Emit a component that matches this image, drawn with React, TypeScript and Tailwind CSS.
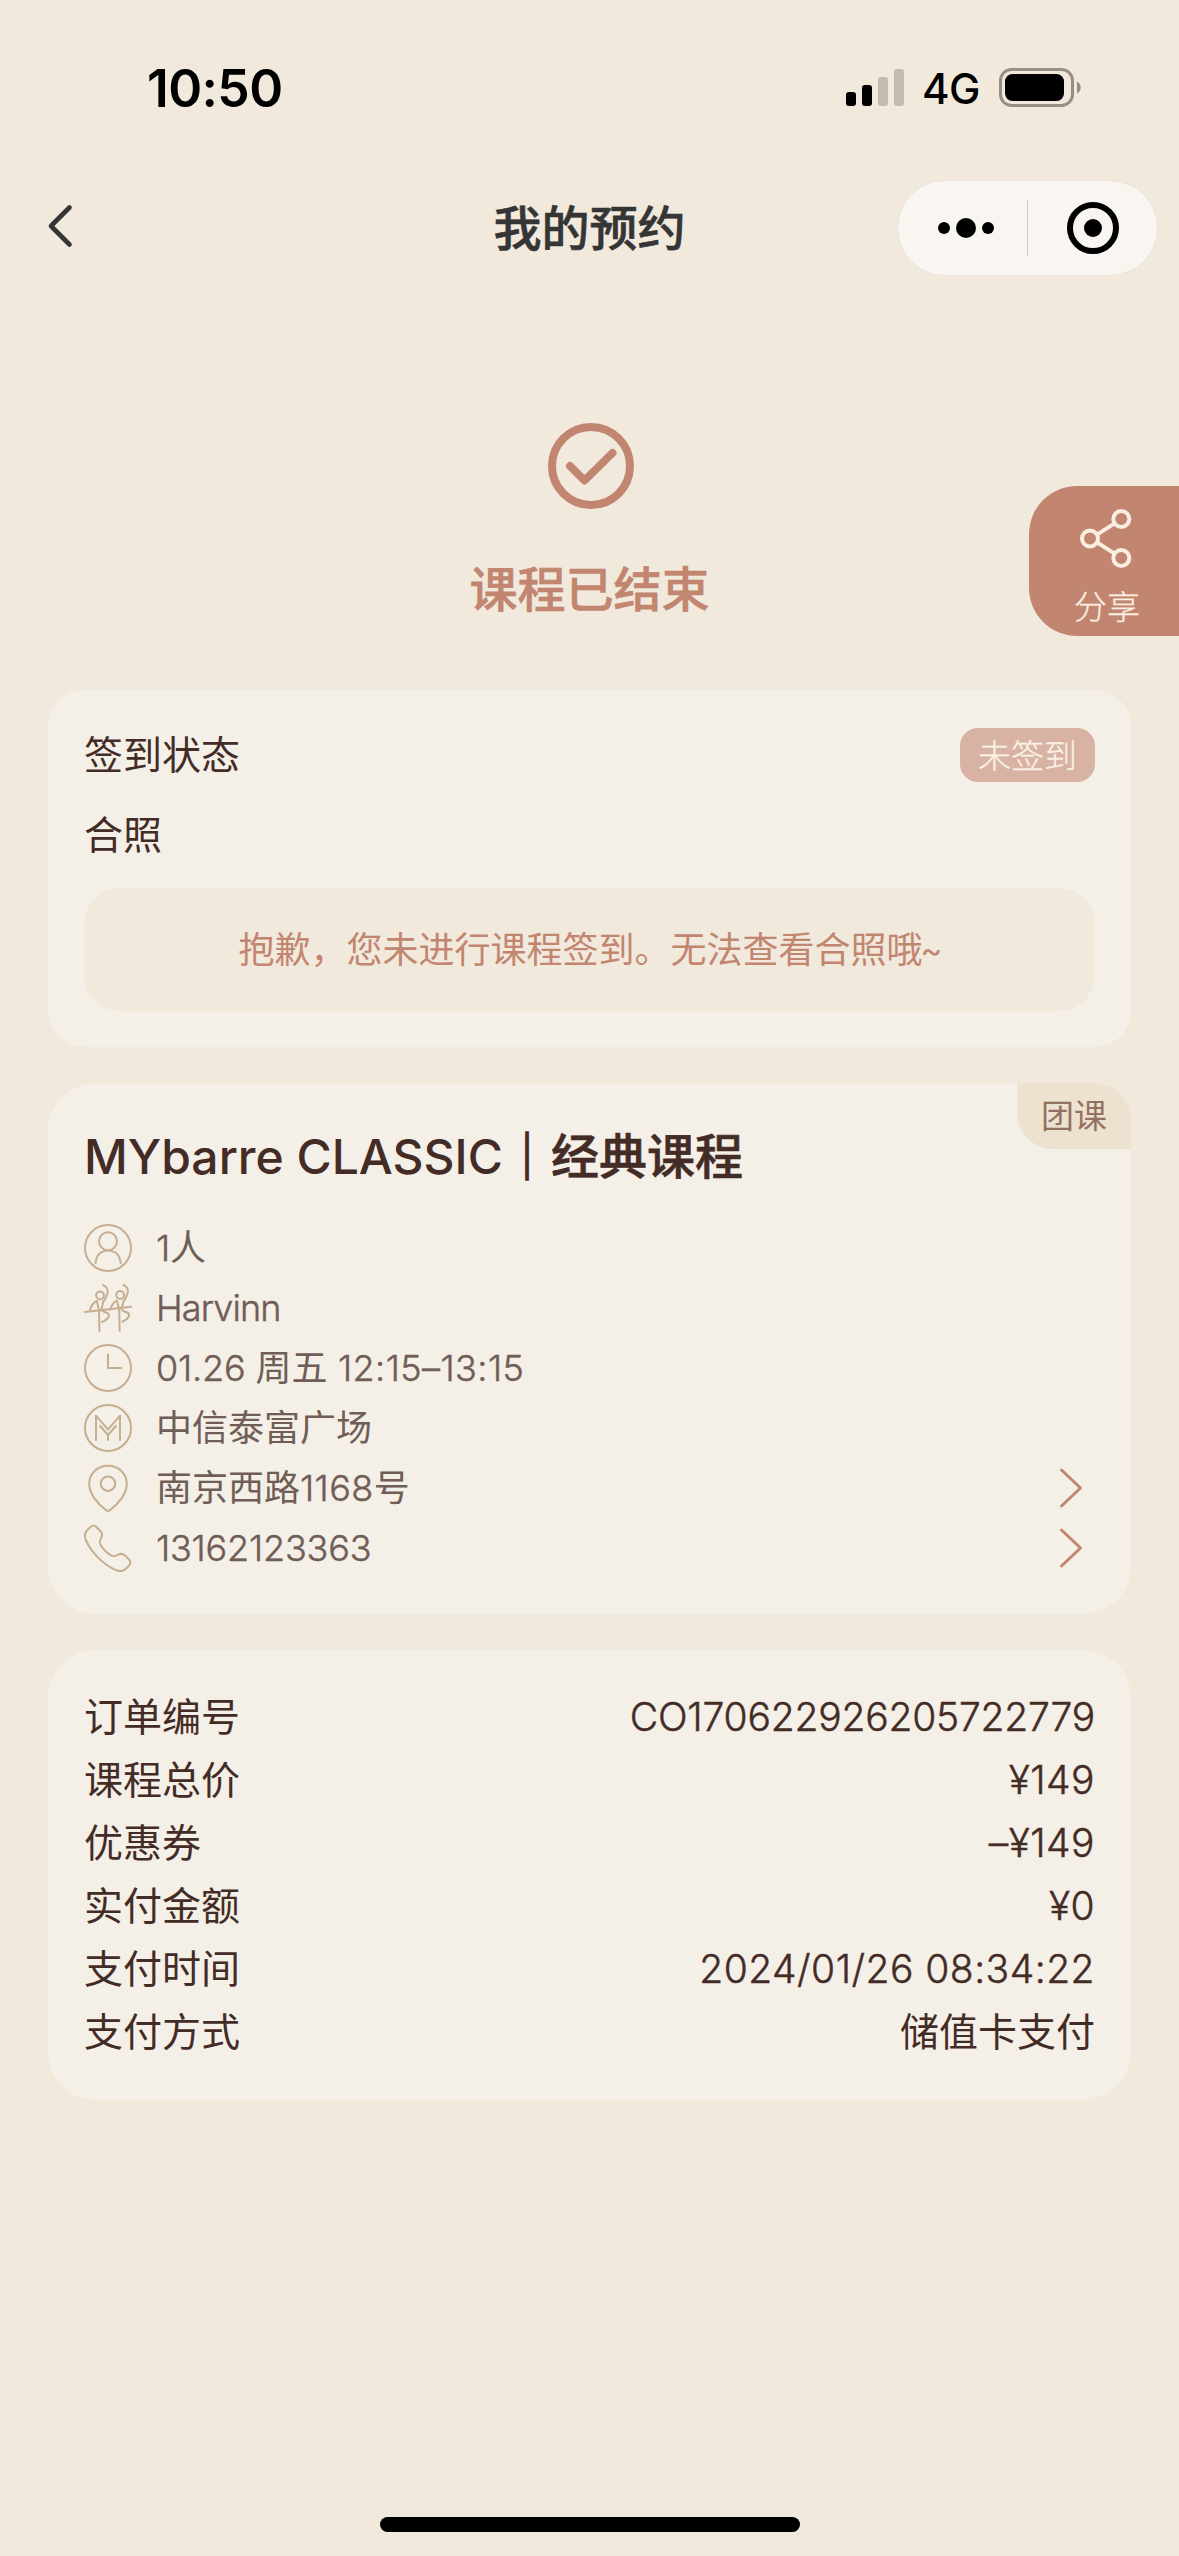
import type { ReactNode } from "react";

const iconProps = {
  width: 48,
  height: 48,
  viewBox: "0 0 48 48",
  fill: "none",
  stroke: "#c6ae90",
  strokeWidth: 2,
  strokeLinecap: "round" as const,
  strokeLinejoin: "round" as const,
  className: "shrink-0",
};

function PersonIcon() {
  return (
    <svg {...iconProps}>
      <circle cx="24" cy="24" r="23" />
      <circle cx="24" cy="17.3" r="9" />
      <path d="M11.6 39.3C12 31 17 26.4 24 26.4S36 31 36.6 39.3" />
    </svg>
  );
}

function Dancer() {
  return (
    <>
      <circle cx="16" cy="11.3" r="3.9" />
      <path d="M19.2 1.1C22.6 2.6 24.3 6 23.4 9.4C22.8 12 21.6 14 20.2 16.8" />
      <path d="M6 26C7.2 21.6 9.6 18.4 12.8 17" />
      <path d="M12.8 17L14.8 25.4M19.4 17L17.4 25.4" />
      <path d="M15 25.6L15.4 47" />
      <path d="M17.8 26.2C20 28.6 25 28.4 25 31.2C25 34 21 37 18 38" />
    </>
  );
}

function DancersIcon() {
  return (
    <svg {...iconProps}>
      <Dancer />
      <g transform="translate(20.2 -.3)">
        <Dancer />
      </g>
      <path d="M1 28L47 22.8" />
    </svg>
  );
}

function ClockIcon() {
  return (
    <svg {...iconProps}>
      <circle cx="24" cy="24" r="23" />
      <path d="M24 10.6V24H37.2" />
    </svg>
  );
}

function StudioIcon() {
  return (
    <svg {...iconProps}>
      <circle cx="24" cy="24" r="23" />
      <path d="M12 36V11.8L24 25.4L36 11.8V36" />
      <path d="M16 22L24 31L32 22M24 31V36" />
    </svg>
  );
}

function PinIcon() {
  return (
    <svg {...iconProps}>
      <path d="M24 1.8C13.4 1.8 5.2 9.8 5.2 19.8C5.2 29.4 13 39.6 22.4 46.4Q24 47.4 25.6 46.4C35 39.6 42.8 29.4 42.8 19.8C42.8 9.8 34.6 1.8 24 1.8Z" />
      <circle cx="24" cy="19.7" r="7.2" />
    </svg>
  );
}

function PhoneIcon() {
  return (
    <svg {...iconProps}>
      <path d="M6.4 3C8.4 1 10.8 1.4 12.6 3.2L16.4 7C19 9.6 18.6 11.6 17 14.4C15.2 17.4 15.2 19 17.4 22.2C19.6 25.6 22.6 28.6 25.8 30.6C29 32.8 30.6 32.8 33.6 31C36.4 29.2 38.4 29.2 41 31.6L44.8 35.2C46.8 37.2 47 39.4 45 41.6L41.6 45C39 47.4 35.6 47.6 32 46.2C19 40.4 7.4 28.6 1.8 16C.4 12.2 .6 9 3 6.4Z" />
    </svg>
  );
}

function ArrowRight() {
  return (
    <svg width="24" height="42" viewBox="0 0 24 42" fill="none" stroke="#c28570" strokeWidth="2.9" strokeLinecap="round" strokeLinejoin="round" className="mr-[12px]">
      <path d="M2.5 3L21.5 21L2.5 39" />
    </svg>
  );
}

function StatusBar() {
  return (
    <div className="flex h-[141px] w-full justify-between pt-[57px] pr-[97px] pl-[147px]">
      <div className="text-[51.5px] leading-[62px] font-semibold tracking-[-0.6px] text-black">10:50</div>
      <div className="flex h-[62px] items-center">
        <svg width="60" height="40" viewBox="0 0 60 40" className="mr-[16px]">
          <rect x="0" y="24" width="10" height="14" rx="3" />
          <rect x="16" y="17" width="10" height="21" rx="3" />
          <rect x="32" y="9" width="10" height="29" rx="3" fill="#c4bbb0" />
          <rect x="48" y="1" width="10" height="37" rx="3" fill="#c4bbb0" />
        </svg>
        <div className="w-[77px] pt-[2px] text-[42px] leading-[62px] font-medium tracking-[-0.5px] text-black">4G</div>
        <svg width="83" height="40" viewBox="0 0 83 40" fill="none">
          <rect x="1.5" y="1.5" width="72" height="36" rx="11" stroke="#978f85" strokeWidth="3" />
          <rect x="6" y="6" width="59" height="27" rx="7.5" fill="#000" />
          <path d="M78 13.5C83 16 83 23 78 25.5Z" fill="#978f85" />
        </svg>
      </div>
    </div>
  );
}

function NavBar() {
  return (
    <div className="grid h-[174px] grid-cols-3 items-start pt-[39px]">
      <svg width="30" height="46" viewBox="0 0 30 46" fill="none" stroke="#353535" strokeWidth="4.6" strokeLinecap="round" strokeLinejoin="round" className="mt-[23px] ml-[46px]">
        <path d="M23.5 4.5L5 23L23.5 41.5" />
      </svg>
      <h1 className="pt-px text-center text-[48px] leading-[96px] font-medium text-[#353535] [-webkit-text-stroke:0.6px_#353535]">我的预约</h1>
      <div className="mr-[21px] flex h-[96px] w-[261px] items-center justify-self-end rounded-full border-1 border-[#e9e3db] bg-[#f9f6f1]">
        <div className="flex w-[129px] items-center justify-center gap-[6px] pl-[6px]">
          <span className="size-[12px] rounded-full bg-black" />
          <span className="size-[20px] rounded-full bg-black" />
          <span className="size-[12px] rounded-full bg-black" />
        </div>
        <span className="h-[56px] w-px bg-[#cdc9c4]" />
        <div className="flex flex-1 justify-center">
          <div className="flex size-[52px] items-center justify-center rounded-full border-[6px] border-black">
            <span className="size-[18px] rounded-full bg-black" />
          </div>
        </div>
      </div>
    </div>
  );
}

function ShareButton() {
  return (
    <button className="absolute top-[486px] right-0 flex h-[150px] w-[150px] flex-col items-center rounded-l-[48px] bg-[#c28570] pt-[21px] pl-[6px] text-[#faeee0]">
      <svg width="54" height="62" viewBox="0 0 54 62" fill="none" stroke="currentColor" strokeWidth="4">
        <circle cx="10" cy="31.5" r="8" />
        <circle cx="41.3" cy="12" r="8" />
        <circle cx="41.3" cy="51" r="8" />
        <path d="M17.4 27.4L34.2 16.6M17.4 35.6L34.2 46.4" />
      </svg>
      <span className="mt-[18px] text-[33px] leading-[40px] font-light [-webkit-text-stroke:0.3px_#faeee0]">分享</span>
    </button>
  );
}

function CheckInCard() {
  return (
    <section className="mx-[48px] h-[357px] rounded-[36px] bg-[#f4efe7] px-[36px] pt-[38px]">
      <div className="flex h-[54px] items-center justify-between text-[39px] leading-[54px]">
        <span>签到状态</span>
        <span className="flex h-[54px] w-[135px] items-center justify-center rounded-[18px] bg-[#d8b3a3] pt-px text-[33px] font-light text-[#faf1e4] [-webkit-text-stroke:0.3px_#faf1e4]">未签到</span>
      </div>
      <div className="mt-[26px] text-[39px] leading-[54px]">合照</div>
      <div className="mt-[26px] flex h-[123px] items-center justify-center rounded-[36px] bg-[#f1e9dc] text-[36px] leading-[50px] text-[#c28570]">
        抱歉，您未进行课程签到。无法查看合照哦<span className="-ml-[2px] text-[33px] tracking-[-0.06em]">~</span>
      </div>
    </section>
  );
}

function Latin({ children }: { children: ReactNode }) {
  return <span className="font-light tracking-[-0.005em] [-webkit-text-stroke:0.45px_currentColor]">{children}</span>;
}

function LatinWide({ children }: { children: ReactNode }) {
  return <span className="font-light tracking-[0.012em] [-webkit-text-stroke:0.45px_currentColor]">{children}</span>;
}

const details: { icon: ReactNode; text: ReactNode; link?: boolean }[] = [
  { icon: <PersonIcon />, text: <><Latin>1</Latin>人</> },
  { icon: <DancersIcon />, text: <span className="font-light tracking-[-0.024em] [-webkit-text-stroke:0.45px_currentColor]">Harvinn</span> },
  { icon: <ClockIcon />, text: <><Latin>01.26 </Latin>周五<LatinWide> 12:15–13:15</LatinWide></> },
  { icon: <StudioIcon />, text: "中信泰富广场" },
  { icon: <PinIcon />, text: <>南京西路<LatinWide>1168</LatinWide>号</>, link: true },
  { icon: <PhoneIcon />, text: <Latin>13162123363</Latin>, link: true },
];

function CourseCard() {
  return (
    <section className="relative mx-[48px] mt-[36px] h-[531px] overflow-hidden rounded-[48px] rounded-tr-[36px] bg-[#f4efe7] px-[36px] pt-[42px]">
      <div className="absolute top-0 right-0 flex h-[66px] w-[114px] items-center justify-center rounded-bl-[36px] bg-[#ede2cf] pt-px text-[33px] text-[#94715f]">团课</div>
      <h2 className="text-[48px] leading-[64px] font-medium whitespace-pre">
        <span>MYbarre CLASSIC</span>
        <span className="[-webkit-text-stroke:1.6px_#442c26]">｜</span>
        <span className="[-webkit-text-stroke:0.6px_#442c26]">经典课程</span>
      </h2>
      <ul className="mt-[29px] text-[36px] leading-[60px] text-[#6f5d56]">
        {details.map((d, i) => (
          <li key={i} className="flex h-[60px] items-center">
            {d.icon}
            <span className="-mt-px ml-[24px] flex-1 whitespace-pre">{d.text}</span>
            {d.link && <ArrowRight />}
          </li>
        ))}
      </ul>
    </section>
  );
}

const order: [string, ReactNode][] = [
  ["订单编号", <Latin>CO170622926205722779</Latin>],
  ["课程总价", <LatinWide>¥149</LatinWide>],
  ["优惠券", <LatinWide>–¥149</LatinWide>],
  ["实付金额", <LatinWide>¥0</LatinWide>],
  ["支付时间", <LatinWide>2024/01/26 08:34:22</LatinWide>],
  ["支付方式", "储值卡支付"],
];

function OrderCard() {
  return (
    <section className="mx-[48px] mt-[36px] rounded-[48px] bg-[#f4efe7] px-[36px] pt-[35px] pb-[37px] text-[39px] leading-[63px]">
      {order.map(([label, value]) => (
        <div key={label} className="flex justify-between">
          <span>{label}</span>
          <span>{value}</span>
        </div>
      ))}
    </section>
  );
}

export default function App() {
  return (
    <div className="relative flex h-[2556px] w-[1179px] flex-col overflow-hidden bg-[#f1e9dc] font-['Inter','Noto_Sans_CJK_SC',sans-serif] text-[#442c26]">
      <StatusBar />
      <NavBar />
      <div className="flex h-[375px] flex-col items-center pt-[106px]">
        <svg width="90" height="90" viewBox="0 0 90 90" fill="none" stroke="#c28570" strokeWidth="8" strokeLinecap="round" strokeLinejoin="round" className="ml-[2px]">
          <circle cx="45" cy="45" r="39" />
          <path d="M24 45L38.5 59.5L66.5 32" />
        </svg>
        <p className="mt-[47px] text-[48px] leading-[64px] font-medium text-[#c28570] [-webkit-text-stroke:0.6px_#c28570]">课程已结束</p>
      </div>
      <ShareButton />
      <CheckInCard />
      <CourseCard />
      <OrderCard />
      <div className="mt-auto mb-[24px] h-[15px] w-[420px] self-center rounded-full bg-black" />
    </div>
  );
}
